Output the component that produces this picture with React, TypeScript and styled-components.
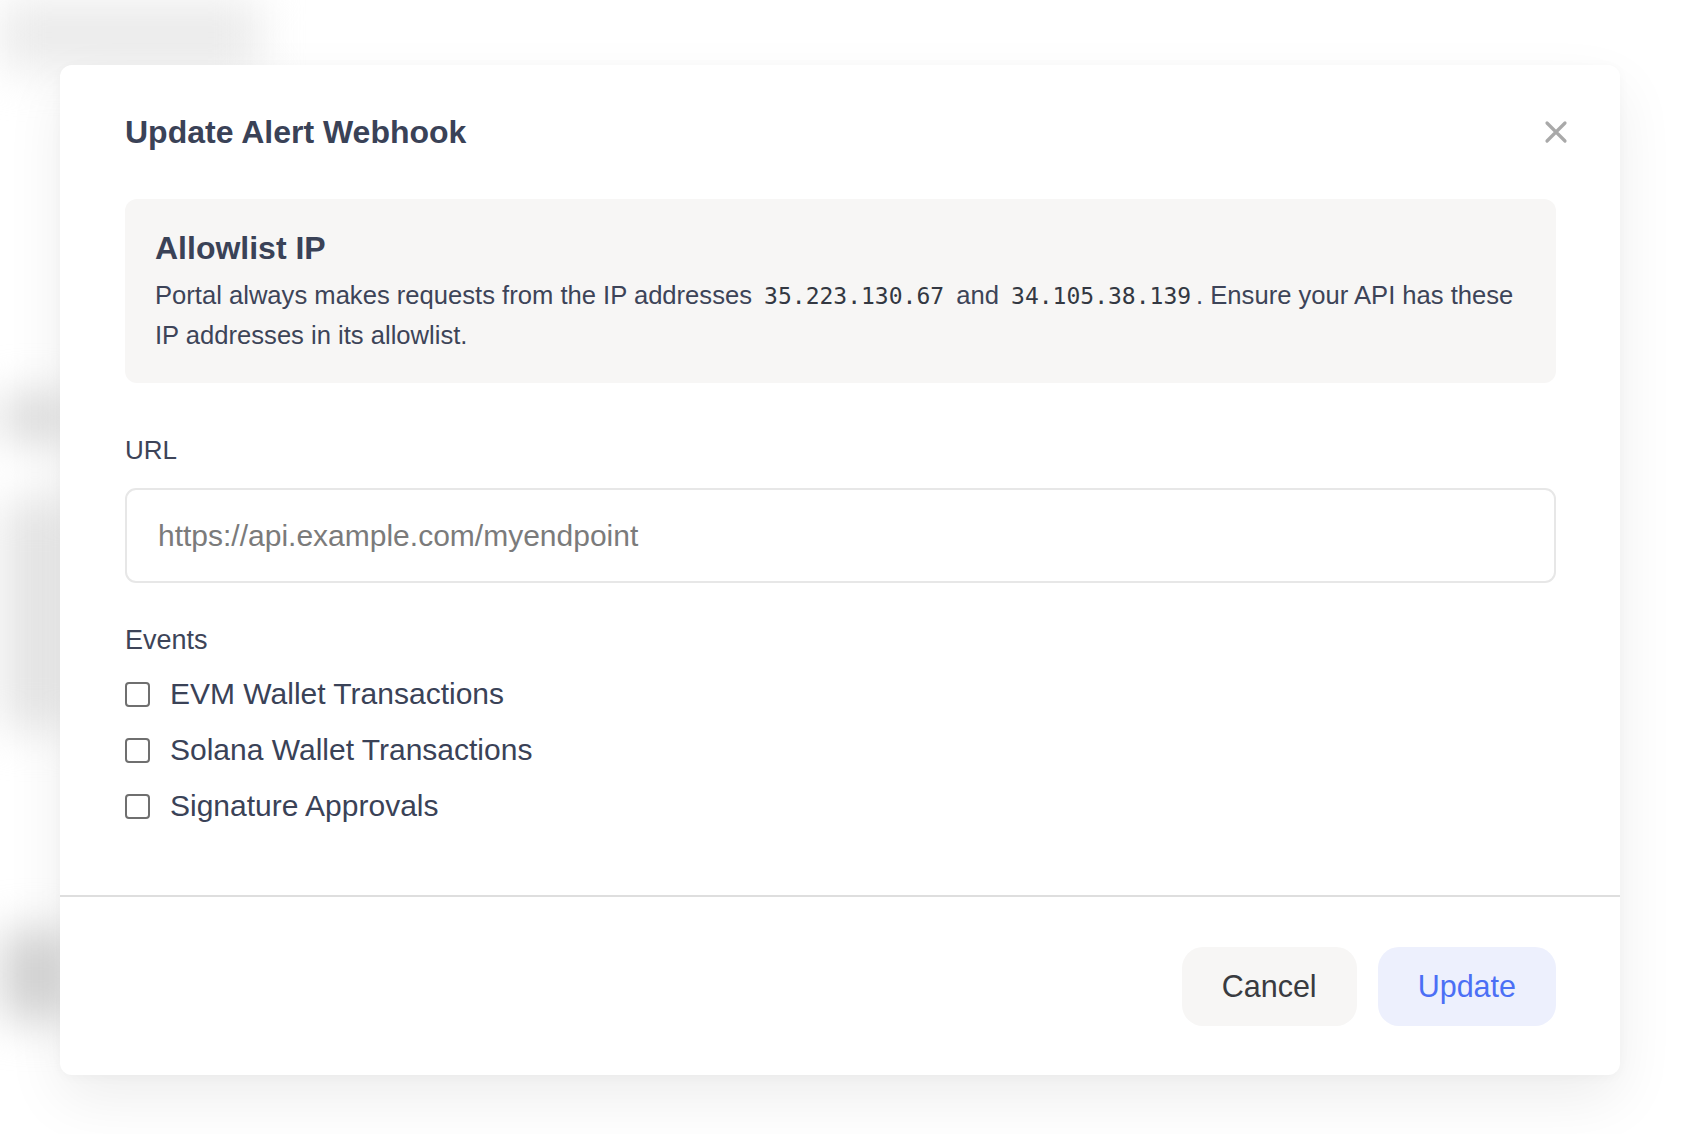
import React from 'react'
import styled, { createGlobalStyle } from 'styled-components'

const GlobalStyle = createGlobalStyle`
  html, body {
    margin: 0;
    padding: 0;
    background: #ffffff;
  }
  body {
    font-family: "Liberation Sans", Arial, sans-serif;
    -webkit-font-smoothing: antialiased;
  }
  * {
    box-sizing: border-box;
  }
`

const events = [
  'EVM Wallet Transactions',
  'Solana Wallet Transactions',
  'Signature Approvals',
]

const blurBlocks = [
  { top: 0, height: 70, width: 260, tone: '#ebebeb' },
  { top: 325, height: 45, width: 70, tone: '#d9d9d9' },
  { top: 60, height: 230, width: 70, tone: '#e6e6e6' },
  { top: 200, height: 90, width: 70, tone: '#d2d2d2' },
]

export default function App() {
  return (
    <>
      <GlobalStyle />
      <Page>
        <Backdrop aria-hidden>
          {blurBlocks.map((b, i) => (
            <BlurBlock key={i} $top={b.top} $height={b.height} $width={b.width} $tone={b.tone} />
          ))}
        </Backdrop>

        <Modal>
          <Header>
            <Title>Update Alert Webhook</Title>
            <CloseButton aria-label="Close">
              <svg width="24" height="24" viewBox="0 0 24 24" fill="none">
                <path d="M3 3L21 21M21 3L3 21" stroke="#a9a9a9" strokeWidth="3.2" strokeLinecap="round" />
              </svg>
            </CloseButton>
          </Header>

          <Body>
            <InfoBox>
              <InfoTitle>Allowlist IP</InfoTitle>
              <InfoText>
                Portal always makes requests from the IP addresses <Code>35.223.130.67</Code> and{' '}
                <Code>34.105.38.139</Code>. Ensure your API has these
                <br />
                IP addresses in its allowlist.
              </InfoText>
            </InfoBox>

            <Field>
              <Label htmlFor="url">URL</Label>
              <Input id="url" type="text" placeholder="https://api.example.com/myendpoint" />
            </Field>

            <Fieldset>
              <Legend>Events</Legend>
              <CheckList>
                {events.map((name) => (
                  <CheckRow key={name}>
                    <Checkbox type="checkbox" />
                    <CheckLabel>{name}</CheckLabel>
                  </CheckRow>
                ))}
              </CheckList>
            </Fieldset>
          </Body>

          <Footer>
            <Button $variant="ghost">Cancel</Button>
            <Button $variant="primary">Update</Button>
          </Footer>
        </Modal>
      </Page>
    </>
  )
}

const Page = styled.div`
  position: relative;
  min-height: 100vh;
  padding: 65px 70px 59px 60px;
  overflow: hidden;
`

const Backdrop = styled.div`
  position: absolute;
  inset: 0;
  filter: blur(22px);
  display: flex;
  flex-direction: column;
  pointer-events: none;
`

const BlurBlock = styled.div<{ $top: number; $height: number; $width: number; $tone: string }>`
  margin-top: ${(p) => p.$top}px;
  height: ${(p) => p.$height}px;
  width: ${(p) => p.$width}px;
  background: ${(p) => p.$tone};
`

const Modal = styled.div`
  position: relative;
  z-index: 1;
  width: 1560px;
  background: #ffffff;
  border-radius: 12px;
  box-shadow: 0 24px 60px rgba(0, 0, 0, 0.07), 0 2px 12px rgba(0, 0, 0, 0.03);
  display: flex;
  flex-direction: column;
`

const Header = styled.div`
  display: flex;
  align-items: center;
  justify-content: space-between;
  padding: 47px 64px 0 65px;
`

const Title = styled.h2`
  margin: 0;
  font-size: 32px;
  line-height: 36px;
  font-weight: 700;
  color: #3a4257;
`

const CloseButton = styled.button`
  width: 40px;
  height: 40px;
  margin-right: -20px;
  padding: 0;
  border: none;
  background: transparent;
  display: flex;
  align-items: center;
  justify-content: center;
  cursor: pointer;
`

const Body = styled.div`
  padding: 47px 64px 69px 65px;
  display: flex;
  flex-direction: column;
`

const InfoBox = styled.div`
  background: #f7f6f5;
  border-radius: 12px;
  padding: 31px 20px 28px 30px;
  height: 184px;
`

const InfoTitle = styled.h3`
  margin: 0 0 10px;
  font-size: 32px;
  line-height: 36px;
  font-weight: 700;
  color: #3a4257;
`

const InfoText = styled.p`
  margin: 0;
  font-size: 25.6px;
  line-height: 39px;
  color: #3d4458;
`

const Code = styled.code`
  font-family: "DejaVu Sans Mono", "Liberation Mono", monospace;
  font-size: 23px;
  color: #333842;
  padding: 0 5px;
`

const Field = styled.div`
  margin-top: 51px;
  display: flex;
  flex-direction: column;
  gap: 22px;
`

const Label = styled.label`
  font-size: 26px;
  line-height: 32px;
  color: #3d4458;
`

const Input = styled.input`
  height: 95px;
  border: 2px solid #e7e7e7;
  border-radius: 11px;
  padding: 0 31px;
  font-family: "Liberation Sans", Arial, sans-serif;
  font-size: 30px;
  color: #333;
  outline: none;

  &::placeholder {
    color: #7b7b7b;
  }
`

const Fieldset = styled.div`
  margin-top: 41px;
  display: flex;
  flex-direction: column;
  gap: 18px;
`

const Legend = styled.div`
  font-size: 27px;
  line-height: 32px;
  color: #3d4458;
`

const CheckList = styled.div`
  display: flex;
  flex-direction: column;
  gap: 16px;
`

const CheckRow = styled.label`
  display: flex;
  align-items: center;
  gap: 20px;
  height: 40px;
  cursor: pointer;
`

const Checkbox = styled.input`
  appearance: none;
  margin: 0;
  width: 25px;
  height: 25px;
  border: 2px solid #6f6f6f;
  border-radius: 4px;
  background: #fff;
`

const CheckLabel = styled.span`
  font-size: 30px;
  line-height: 40px;
  color: #3a4257;
`

const Footer = styled.div`
  border-top: 2px solid #dedede;
  padding: 50px 64px 49px;
  display: flex;
  justify-content: flex-end;
  gap: 21px;
`

const Button = styled.button<{ $variant: 'ghost' | 'primary' }>`
  height: 79px;
  padding: 0 40px;
  border: none;
  border-radius: 21px;
  font-family: "Liberation Sans", Arial, sans-serif;
  font-size: 30.5px;
  cursor: pointer;
  background: ${(p) => (p.$variant === 'primary' ? '#edf0fd' : '#f7f6f5')};
  color: ${(p) => (p.$variant === 'primary' ? '#4b6ff5' : '#393b40')};
`
